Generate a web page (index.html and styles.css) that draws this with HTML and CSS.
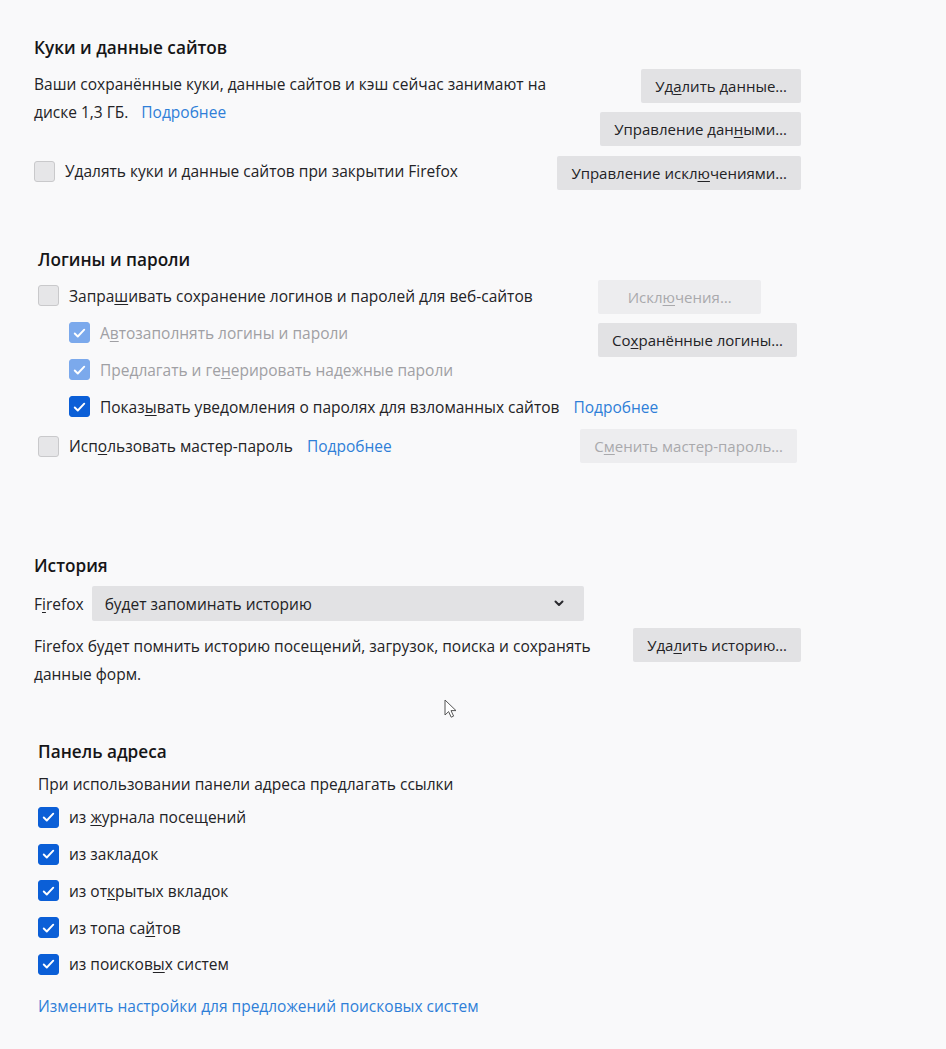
FILE: index.html
```html
<!DOCTYPE html>
<html lang="ru">
<head>
<meta charset="utf-8">
<title>Настройки</title>
<link rel="stylesheet" href="styles.css">
</head>
<body>
<main class="page">

  <section class="section cookies">
    <h2 class="heading">Куки и данные сайтов</h2>
    <div class="cookie-grid">
      <p class="desc">Ваши сохранённые куки, данные сайтов и кэш сейчас занимают на диске 1,3 ГБ. <a class="link gap-link" href="#">Подробнее</a></p>
      <div class="btn-col">
        <button class="btn">Уд<u>а</u>лить данные…</button>
        <button class="btn">Управление дан<u>н</u>ыми…</button>
      </div>
      <label class="check-row cookie-check">
        <span class="box"></span>
        <span>Удалять куки и данные сайтов при закрытии Firefox</span>
      </label>
      <div class="btn-col">
        <button class="btn">Управление искл<u>ю</u>чениями…</button>
      </div>
    </div>
  </section>

  <section class="section logins">
    <h2 class="heading">Логины и пароли</h2>
    <div class="login-grid">
      <div class="rows">
        <label class="check-row"><span class="box"></span><span>Запра<u>ш</u>ивать сохранение логинов и паролей для веб-сайтов</span></label>
        <label class="check-row indent disabled"><span class="box checked dim"><svg viewBox="0 0 20 20"><path d="M5 10.5l3.2 3.2L15 6.5"/></svg></span><span>А<u>в</u>тозаполнять логины и пароли</span></label>
        <label class="check-row indent disabled"><span class="box checked dim"><svg viewBox="0 0 20 20"><path d="M5 10.5l3.2 3.2L15 6.5"/></svg></span><span>Предлагать и ге<u>н</u>ерировать надежные пароли</span></label>
        <label class="check-row indent"><span class="box checked"><svg viewBox="0 0 20 20"><path d="M5 10.5l3.2 3.2L15 6.5"/></svg></span><span>Показ<u>ы</u>вать уведомления о паролях для взломанных сайтов</span><a class="link breach-link" href="#">Подробнее</a></label>
      </div>
      <div class="btn-col left">
        <button class="btn disabled-btn exc-btn">Искл<u>ю</u>чения…</button>
        <button class="btn">Со<u>х</u>ранённые логины…</button>
      </div>
    </div>
    <div class="master-row">
      <label class="check-row"><span class="box"></span><span>Исп<u>о</u>льзовать мастер-пароль</span><a class="link master-link" href="#">Подробнее</a></label>
      <button class="btn disabled-btn">С<u>м</u>енить мастер-пароль…</button>
    </div>
  </section>

  <section class="section history">
    <h2 class="heading">История</h2>
    <div class="select-row">
      <span class="select-label">F<u>i</u>refox</span>
      <div class="select">
        <span>будет запоминать историю</span>
        <svg class="chev" viewBox="0 0 10 7"><path d="M1.5 1.5l3.5 3.5 3.5-3.5"/></svg>
      </div>
    </div>
    <div class="history-row">
      <p class="desc">Firefox будет помнить историю посещений, загрузок, поиска и сохранять данные форм.</p>
      <button class="btn">Уда<u>л</u>ить историю…</button>
    </div>
  </section>

  <section class="section address">
    <h2 class="heading">Панель адреса</h2>
    <p class="lead">При использовании панели адреса предлагать ссылки</p>
    <div class="addr-list">
      <label class="check-row"><span class="box checked"><svg viewBox="0 0 20 20"><path d="M5 10.5l3.2 3.2L15 6.5"/></svg></span><span>из <u>ж</u>урнала посещений</span></label>
      <label class="check-row"><span class="box checked"><svg viewBox="0 0 20 20"><path d="M5 10.5l3.2 3.2L15 6.5"/></svg></span><span>из закла<u>д</u>ок</span></label>
      <label class="check-row"><span class="box checked"><svg viewBox="0 0 20 20"><path d="M5 10.5l3.2 3.2L15 6.5"/></svg></span><span>из от<u>к</u>рытых вкладок</span></label>
      <label class="check-row"><span class="box checked"><svg viewBox="0 0 20 20"><path d="M5 10.5l3.2 3.2L15 6.5"/></svg></span><span>из топа са<u>й</u>тов</span></label>
      <label class="check-row"><span class="box checked"><svg viewBox="0 0 20 20"><path d="M5 10.5l3.2 3.2L15 6.5"/></svg></span><span>из поисков<u>ы</u>х систем</span></label>
    </div>
    <a class="link bottom-link" href="#">Изменить настройки для предложений поисковых систем</a>
  </section>

  <svg class="cursor" viewBox="0 0 14 20"><path d="M1 1v15l3.6-3.4 2.6 5.6 2.4-1.1-2.6-5.5H12z"/></svg>
</main>
</body>
</html>
```

FILE: styles.css
```css
* { box-sizing: border-box; }

html, body {
  margin: 0;
  padding: 0;
  background: #f9f9fa;
}

body {
  font-family: "Open Sans", "Noto Sans", sans-serif;
  font-size: 15.5px;
  color: #232326;
}

.page {
  position: relative;
  width: 946px;
  min-height: 1049px;
  padding: 36px 0 0 34px;
}

.section { margin: 0; }
.logins, .address { padding-left: 4px; }

.heading {
  margin: 0;
  font-size: 17.2px;
  line-height: 24px;
  font-weight: 600;
  color: #151517;
}

p { margin: 0; }
u { text-decoration-thickness: 1px; text-underline-offset: 2px; }

.link {
  color: #2f7fd8;
  text-decoration: none;
}

/* buttons */
.btn {
  height: 34px;
  padding: 0 14px;
  border: none;
  border-radius: 2px;
  background: #e2e2e4;
  color: #232326;
  font-family: inherit;
  font-size: 15px;
  white-space: nowrap;
}
.disabled-btn {
  background: #ededef;
  color: #a9a9ac;
}

.btn-col {
  display: flex;
  flex-direction: column;
  align-items: flex-end;
  gap: 9px;
}
.btn-col.left { align-items: flex-start; }

/* checkbox */
.check-row {
  display: flex;
  align-items: center;
  gap: 10px;
  white-space: nowrap;
}
.box {
  flex: none;
  width: 21px;
  height: 21px;
  border: 1px solid #c9c9cb;
  border-radius: 3px;
  background: #e6e6e8;
  display: flex;
  align-items: center;
  justify-content: center;
}
.box.checked {
  background: #0b5fd7;
  border-color: #0b5fd7;
}
.box.checked.dim {
  background: #7ba9ec;
  border-color: #7ba9ec;
}
.box svg { width: 20px; height: 20px; }
.box svg path {
  fill: none;
  stroke: #fff;
  stroke-width: 2;
  stroke-linecap: round;
  stroke-linejoin: round;
}
.disabled { color: #a0a0a4; }

/* cookies */
.cookie-grid {
  margin-top: 9px;
  width: 767px;
  display: grid;
  grid-template-columns: minmax(0, 1fr) auto;
  row-gap: 10px;
}
.cookie-grid .desc {
  width: 518px;
  line-height: 28px;
  padding-top: 1px;
}
.cookie-check {
  align-self: start;
  height: 30px;
}
.gap-link { margin-left: 9px; }

/* logins */
.logins { margin-top: 58px; }
.login-grid {
  margin-top: 5px;
  width: 759px;
  display: grid;
  grid-template-columns: minmax(0, 1fr) auto;
}
.rows { display: flex; flex-direction: column; min-width: 0; }
.rows .check-row { height: 37px; }
.indent { padding-left: 31px; }
.breach-link { margin-left: 4px; }
.exc-btn { width: 163px; }
.login-grid .btn-col { padding-top: 3px; }
.master-row {
  margin-top: 4px;
  width: 759px;
  display: flex;
  align-items: center;
  justify-content: space-between;
}
.master-link { margin-left: 4px; }

/* history */
.history { margin-top: 91px; }
.select-row {
  margin-top: 8px;
  display: flex;
  align-items: center;
  gap: 8px;
}
.select {
  width: 492px;
  height: 35px;
  background: #e2e2e4;
  border-radius: 2px;
  display: flex;
  align-items: center;
  justify-content: space-between;
  padding: 0 20px 0 13px;
}
.chev { width: 10px; height: 7px; }
.chev path {
  fill: none;
  stroke: #2a2a2e;
  stroke-width: 2;
  stroke-linecap: round;
  stroke-linejoin: round;
}
.history-row {
  margin-top: 7px;
  width: 767px;
  display: flex;
  justify-content: space-between;
  align-items: flex-start;
}
.history-row .desc {
  width: 570px;
  line-height: 28px;
  padding-top: 4px;
}

/* address bar */
.address { margin-top: 52px; }
.lead {
  margin-top: 8px;
  line-height: 24px;
}
.addr-list {
  margin-top: 3px;
  display: flex;
  flex-direction: column;
}
.addr-list .check-row { height: 36.75px; }
.bottom-link {
  display: block;
  margin-top: 11px;
  line-height: 24px;
}

.cursor {
  position: absolute;
  left: 444px;
  top: 699px;
  width: 14px;
  height: 20px;
}
.cursor path {
  fill: #fff;
  stroke: #555;
  stroke-width: 1;
}
```
